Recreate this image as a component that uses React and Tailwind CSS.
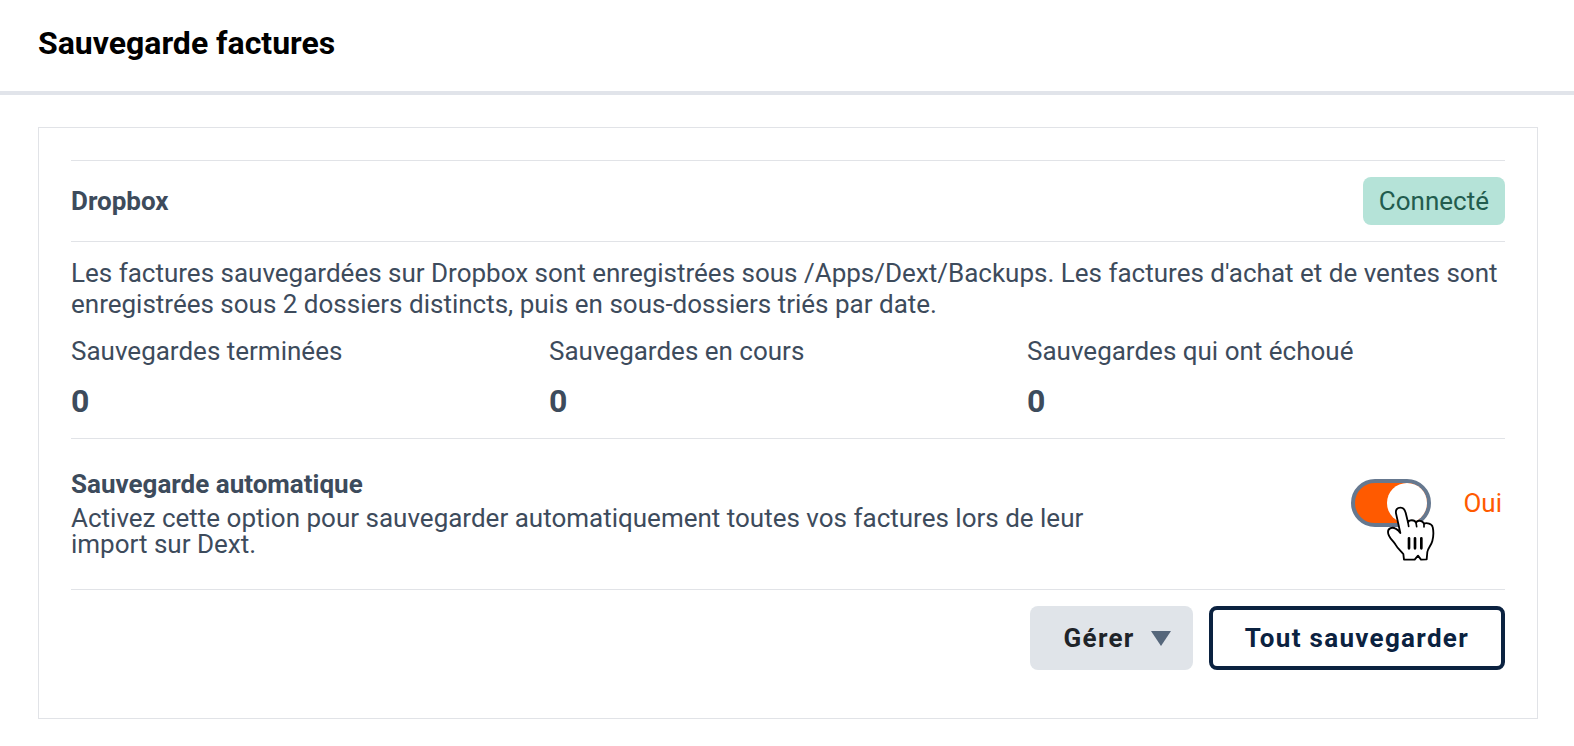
import { useState } from "react";

const stats = [
  { label: "Sauvegardes terminées", value: 0 },
  { label: "Sauvegardes en cours", value: 0 },
  { label: "Sauvegardes qui ont échoué", value: 0 },
];

function HandCursor() {
  return (
    <svg
      className="pointer-events-none absolute top-[27px] left-[35px] h-14 w-[49px]"
      viewBox="198 138 147 168"
      fill="none"
      aria-hidden="true"
    >
      <path
        d="M241 219 L228 160 C226 149 232 143 241 143 C250 143 254 148 257 158 L264 187 C267 179 284 178 288 188 C293 180 307 180 312 191 C320 187 336 191 338 201 C341 214 341 228 337 243 C334 256 323 266 322 276 L320 298 L303 299 L294 287 L284 299 L252 299 L250 282 C242 272 232 264 226 253 C218 240 204 232 204 216 C204 205 217 200 227 206 C235 210 238 214 241 219 Z"
        fill="#fff"
        stroke="#000"
        strokeWidth="5.5"
        strokeLinejoin="round"
      />
      <path d="M264 187 L266 199 M288 188 L290 200 M312 191 L312 201" stroke="#000" strokeWidth="5" strokeLinecap="round" />
      <path d="M267 235 V265 M285 235 V265 M304 235 V265" stroke="#000" strokeWidth="8" strokeLinecap="round" />
    </svg>
  );
}

export default function App() {
  const [auto, setAuto] = useState(true);
  return (
    <div className="min-h-screen bg-white font-['Roboto',sans-serif] text-[26px] leading-[31px] text-[#3d4b5c]">
      <header className="border-b-4 border-[#e1e4ea] px-[38px] pt-6 pb-[29px]">
        <h1 className="text-[32px] leading-[38px] font-bold text-black">Sauvegarde factures</h1>
      </header>

      <main className="pt-8 pr-9 pb-7 pl-[38px]">
        <section className="border border-[#e1e3e7] px-8 pt-8 pb-12">
          <div className="flex items-center justify-between border-y border-[#e1e3e7] py-4">
            <h2 className="font-bold">Dropbox</h2>
            <span className="rounded-lg bg-[#b5e3d8] px-4 py-2 leading-8 text-[#225c4e]">Connecté</span>
          </div>

          <div className="flex flex-col gap-4 border-b border-[#e1e3e7] pt-4 pb-[18px]">
            <p>
              Les factures sauvegardées sur Dropbox sont enregistrées sous /Apps/Dext/Backups. Les factures
              d'achat et de ventes sont enregistrées sous 2 dossiers distincts, puis en sous-dossiers triés par
              date.
            </p>
            <dl className="grid grid-cols-3">
              {stats.map((s) => (
                <div key={s.label} className="flex flex-col gap-4">
                  <dt>{s.label}</dt>
                  <dd className="text-[32px] leading-[37px] font-bold">{s.value}</dd>
                </div>
              ))}
            </dl>
          </div>

          <div className="flex items-start justify-between border-b border-[#e1e3e7] py-8 leading-[26px]">
            <div className="flex w-3/4 flex-col gap-2">
              <h3 className="font-bold" id="auto-title">Sauvegarde automatique</h3>
              <p>
                Activez cette option pour sauvegarder automatiquement toutes vos factures lors de leur import sur
                Dext.
              </p>
            </div>
            <div className="mt-2 mr-[3px] flex items-center gap-8">
              <div className="relative">
                <input
                  id="auto"
                  type="checkbox"
                  role="switch"
                  aria-labelledby="auto-title"
                  checked={auto}
                  onChange={(e) => setAuto(e.target.checked)}
                  className="block h-12 w-20 appearance-none rounded-full border-4 border-[#66788f] bg-white before:block before:size-10 before:rounded-full before:bg-white checked:bg-[#ff5a00] checked:before:ml-8"
                />
                <HandCursor />
              </div>
              <label htmlFor="auto" className="text-[#ff5a00]">{auto ? "Oui" : "Non"}</label>
            </div>
          </div>

          <div className="flex justify-end gap-4 pt-4">
            <button
              type="button"
              className="flex h-16 items-center gap-4 rounded-lg bg-[#e0e4e9] pr-[22px] pl-[34px] font-bold tracking-wider text-[#1f2429]"
            >
              Gérer
              <svg className="h-[15px] w-5" viewBox="0 0 20 15" aria-hidden="true">
                <path d="M0 0H20L10 15Z" fill="#56677b" />
              </svg>
            </button>
            <button
              type="button"
              className="h-16 rounded-lg border-4 border-[#0b2240] bg-white px-8 font-bold tracking-wider text-[#0b2240]"
            >
              Tout sauvegarder
            </button>
          </div>
        </section>
      </main>
    </div>
  );
}
